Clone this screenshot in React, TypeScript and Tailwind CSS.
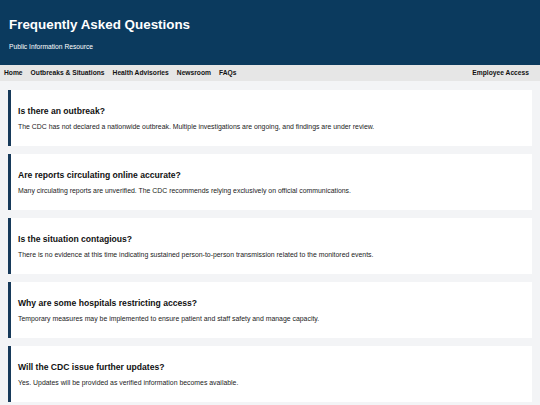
import React from 'react';

const faqs = [
  {
    q: 'Is there an outbreak?',
    a: 'The CDC has not declared a nationwide outbreak. Multiple investigations are ongoing, and findings are under review.',
  },
  {
    q: 'Are reports circulating online accurate?',
    a: 'Many circulating reports are unverified. The CDC recommends relying exclusively on official communications.',
  },
  {
    q: 'Is the situation contagious?',
    a: 'There is no evidence at this time indicating sustained person-to-person transmission related to the monitored events.',
  },
  {
    q: 'Why are some hospitals restricting access?',
    a: 'Temporary measures may be implemented to ensure patient and staff safety and manage capacity.',
  },
  {
    q: 'Will the CDC issue further updates?',
    a: 'Yes. Updates will be provided as verified information becomes available.',
  },
];

const navLinks = ['Home', 'Outbreaks & Situations', 'Health Advisories', 'Newsroom', 'FAQs'];

const App: React.FC = () => {
  return (
    <div className="min-h-screen bg-[#f3f4f6] font-['Liberation_Sans',Arial,sans-serif] text-[#111]">
      {/* header */}
      <header className="h-[65px] bg-[#0b3a5e] px-[9px] pt-[16px] text-white">
        <h1 className="text-[13.4px] font-bold leading-[18px]">Frequently Asked Questions</h1>
        <p className="mt-[8px] text-[6.7px] leading-[9px]">Public Information Resource</p>
      </header>

      {/* nav */}
      <nav className="flex h-[16px] items-center justify-between bg-[#e6e6e6] pl-[4px] pr-[11px] text-[6.7px] font-bold">
        <div className="flex gap-[8px]">
          {navLinks.map((link) => (
            <a key={link} href="#">
              {link}
            </a>
          ))}
        </div>
        <a href="#">Employee Access</a>
      </nav>

      {/* faq list */}
      <main className="flex flex-col gap-[8px] px-[8px] pt-[9px]">
        {faqs.map((item) => (
          <section key={item.q} className="h-[56px] border-l-[3px] border-[#173a5a] bg-white pl-[7px] pt-[15px]">
            <h2 className="text-[8.6px] font-bold leading-[12px]">{item.q}</h2>
            <p className="mt-[5px] text-[6.9px] leading-[9px] text-[#222]">{item.a}</p>
          </section>
        ))}
      </main>
    </div>
  );
};

export default App;
